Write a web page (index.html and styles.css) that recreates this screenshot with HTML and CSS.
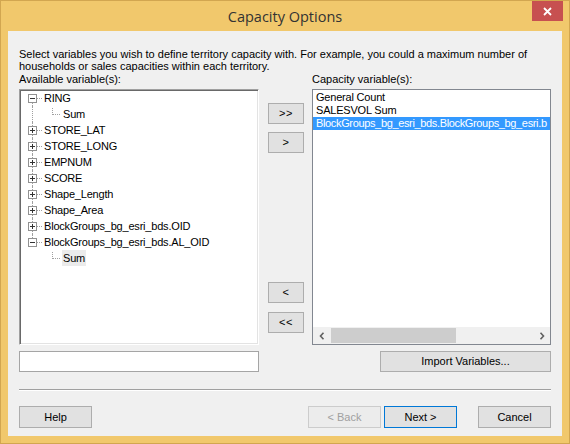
FILE: index.html
```html
<!DOCTYPE html>
<html>
<head>
<meta charset="utf-8">
<title>Capacity Options</title>
<link rel="stylesheet" href="styles.css">
</head>
<body>
<div class="frame">
  <div class="titlebar">
    <div class="title">Capacity Options</div>
    <div class="close">
      <svg width="9" height="9" viewBox="0 0 9 9"><path d="M1 1L8 8M8 1L1 8" stroke="#fff" stroke-width="1.8"/></svg>
    </div>
  </div>
  <div class="client">
    <p class="desc">Select variables you wish to define territory capacity with. For example, you could a maximum number of households or sales capacities within each territory.</p>
    <div class="main">
      <div class="lbl lbl-left">Available variable(s):</div>
      <div class="lbl lbl-right">Capacity variable(s):</div>

      <div class="tree">
        <ul class="nodes">
          <li class="row root first"><svg class="exp" viewBox="0 0 9 9"><rect x="0.5" y="0.5" width="8" height="8" fill="#fff" stroke="#919191"/><path d="M2 4.5h5" stroke="#333"/></svg><span class="h"></span><span class="txt">RING</span></li>
          <li class="row child cont"><span class="txt">Sum</span></li>
          <li class="row root"><svg class="exp" viewBox="0 0 9 9"><rect x="0.5" y="0.5" width="8" height="8" fill="#fff" stroke="#919191"/><path d="M2 4.5h5M4.5 2v5" stroke="#333"/></svg><span class="h"></span><span class="txt">STORE_LAT</span></li>
          <li class="row root"><svg class="exp" viewBox="0 0 9 9"><rect x="0.5" y="0.5" width="8" height="8" fill="#fff" stroke="#919191"/><path d="M2 4.5h5M4.5 2v5" stroke="#333"/></svg><span class="h"></span><span class="txt">STORE_LONG</span></li>
          <li class="row root"><svg class="exp" viewBox="0 0 9 9"><rect x="0.5" y="0.5" width="8" height="8" fill="#fff" stroke="#919191"/><path d="M2 4.5h5M4.5 2v5" stroke="#333"/></svg><span class="h"></span><span class="txt">EMPNUM</span></li>
          <li class="row root"><svg class="exp" viewBox="0 0 9 9"><rect x="0.5" y="0.5" width="8" height="8" fill="#fff" stroke="#919191"/><path d="M2 4.5h5M4.5 2v5" stroke="#333"/></svg><span class="h"></span><span class="txt">SCORE</span></li>
          <li class="row root"><svg class="exp" viewBox="0 0 9 9"><rect x="0.5" y="0.5" width="8" height="8" fill="#fff" stroke="#919191"/><path d="M2 4.5h5M4.5 2v5" stroke="#333"/></svg><span class="h"></span><span class="txt">Shape_Length</span></li>
          <li class="row root"><svg class="exp" viewBox="0 0 9 9"><rect x="0.5" y="0.5" width="8" height="8" fill="#fff" stroke="#919191"/><path d="M2 4.5h5M4.5 2v5" stroke="#333"/></svg><span class="h"></span><span class="txt">Shape_Area</span></li>
          <li class="row root"><svg class="exp" viewBox="0 0 9 9"><rect x="0.5" y="0.5" width="8" height="8" fill="#fff" stroke="#919191"/><path d="M2 4.5h5M4.5 2v5" stroke="#333"/></svg><span class="h"></span><span class="txt">BlockGroups_bg_esri_bds.OID</span></li>
          <li class="row root last"><svg class="exp" viewBox="0 0 9 9"><rect x="0.5" y="0.5" width="8" height="8" fill="#fff" stroke="#919191"/><path d="M2 4.5h5" stroke="#333"/></svg><span class="h"></span><span class="txt">BlockGroups_bg_esri_bds.AL_OID</span></li>
          <li class="row child"><span class="txt hl">Sum</span></li>
        </ul>
      </div>

      <div class="mid">
        <div class="group">
          <button class="btn small">&gt;&gt;</button>
          <button class="btn small">&gt;</button>
        </div>
        <div class="group">
          <button class="btn small">&lt;</button>
          <button class="btn small">&lt;&lt;</button>
        </div>
      </div>

      <div class="list">
        <div class="items">
          <div class="item">General Count</div>
          <div class="item">SALESVOL Sum</div>
          <div class="item sel">BlockGroups_bg_esri_bds.BlockGroups_bg_esri.b</div>
        </div>
        <div class="hscroll">
          <div class="arrow"><svg width="6" height="8" viewBox="0 0 6 8"><path d="M4.5 0.8L1.5 4L4.5 7.2" fill="none" stroke="#606060" stroke-width="1.6"/></svg></div>
          <div class="track"><div class="thumb"></div></div>
          <div class="arrow"><svg width="6" height="8" viewBox="0 0 6 8"><path d="M1.5 0.8L4.5 4L1.5 7.2" fill="none" stroke="#606060" stroke-width="1.6"/></svg></div>
        </div>
      </div>

      <div class="field"></div>
      <button class="btn import">Import Variables...</button>
    </div>
    <div class="sep"></div>
    <div class="footer">
      <button class="btn">Help</button>
      <button class="btn disabled back">&lt; Back</button>
      <button class="btn default next">Next &gt;</button>
      <button class="btn cancel">Cancel</button>
    </div>
  </div>
</div>
</body>
</html>
```
FILE: styles.css
```css
html, body {
  margin: 0;
  padding: 0;
}
body {
  width: 570px;
  height: 444px;
  overflow: hidden;
  background: #f1c86c;
  font-family: "Liberation Sans", Arial, sans-serif;
  font-size: 11px;
  color: #000;
}
.frame {
  box-sizing: border-box;
  width: 570px;
  height: 444px;
  border: 1px solid #d2a650;
  display: flex;
  flex-direction: column;
}
.titlebar {
  height: 30px;
  flex: none;
  display: grid;
  grid-template-columns: 1fr auto 1fr;
  align-items: start;
}
.title {
  grid-column: 2;
  font-family: "Open Sans", "Liberation Sans", sans-serif;
  font-size: 14.5px;
  line-height: 20px;
  padding-top: 6px;
  color: #333;
}
.close {
  grid-column: 3;
  justify-self: end;
  margin-right: 6px;
  width: 31px;
  height: 20px;
  background: #c75050;
  display: flex;
  align-items: center;
  justify-content: center;
}
.client {
  flex: 1;
  margin: 0 7px 7px 7px;
  background: #f0f0f0;
  padding: 17px 11px 8px 11px;
  display: flex;
  flex-direction: column;
}
.desc {
  margin: 0;
  line-height: 12px;
}
.main {
  display: grid;
  grid-template-columns: 240px 53px 239px;
  grid-template-rows: 17px 256px 27px;
}
.lbl {
  grid-row: 1;
  padding-top: 1px;
  line-height: 13px;
}
.lbl-left { grid-column: 1; }
.lbl-right { grid-column: 3; }

.tree {
  grid-row: 2;
  grid-column: 1;
  box-sizing: border-box;
  background: #fff;
  border-top: 1px solid #a0a0a0;
  border-left: 1px solid #a0a0a0;
  border-right: 1px solid #fff;
  border-bottom: 1px solid #fff;
  box-shadow: inset 1px 1px 0 #696969, inset -1px -1px 0 #e3e3e3;
  padding: 1px;
  overflow: hidden;
  letter-spacing: -0.2px;
}
.nodes {
  list-style: none;
  margin: -1px 0 0 0;
  padding: 0;
}
.row {
  position: relative;
  height: 16px;
  display: flex;
  align-items: center;
  white-space: nowrap;
}
.root { padding-left: 7px; }
.child { padding-left: 41px; }
.exp {
  width: 9px;
  height: 9px;
  flex: none;
  position: relative;
  z-index: 1;
}
.h {
  width: 5px;
  height: 0;
  border-top: 1px dotted #a0a0a0;
  margin-right: 2px;
  flex: none;
}
.txt {
  line-height: 16px;
  height: 16px;
}
.child .txt { padding: 0 1px; }
.root::before, .cont::before {
  content: "";
  position: absolute;
  left: 11px;
  top: 0;
  bottom: 0;
  border-left: 1px dotted #a0a0a0;
}
.root.first::before { top: 8px; }
.root.last::before { bottom: 8px; }
.child::after {
  content: "";
  position: absolute;
  left: 31px;
  top: 2px;
  width: 7px;
  height: 6px;
  border-left: 1px dotted #a0a0a0;
  border-bottom: 1px dotted #a0a0a0;
}
.hl { background: #ebebeb; }

.mid {
  grid-row: 2;
  grid-column: 2;
  display: flex;
  flex-direction: column;
  justify-content: space-between;
  padding: 14px 0 12px 9px;
}
.group {
  display: flex;
  flex-direction: column;
  gap: 8px;
}
.group + .group { gap: 9px; }
.btn {
  box-sizing: border-box;
  font-family: inherit;
  font-size: 11px;
  color: #000;
  background: #e1e1e1;
  border: 1px solid #adadad;
  border-radius: 0;
  padding: 0;
  margin: 0;
  height: 22px;
  width: 73px;
  line-height: 20px;
  text-align: center;
}
.btn.small {
  width: 36px;
  height: 21px;
  line-height: 19px;
  letter-spacing: 0.6px;
}

.list {
  grid-row: 2;
  grid-column: 3;
  box-sizing: border-box;
  border: 1px solid #828790;
  background: #fff;
  display: flex;
  flex-direction: column;
  overflow: hidden;
  letter-spacing: -0.2px;
}
.items {
  flex: 1;
  padding-top: 1px;
}
.item {
  height: 13px;
  line-height: 13px;
  padding-left: 3px;
  white-space: nowrap;
  overflow: hidden;
}
.item.sel {
  background: #3399ff;
  color: #fff;
  letter-spacing: -0.35px;
}
.hscroll {
  height: 17px;
  flex: none;
  background: #f0f0f0;
  display: flex;
  align-items: center;
}
.arrow {
  width: 17px;
  height: 17px;
  flex: none;
  display: flex;
  align-items: center;
  justify-content: center;
}
.track {
  flex: 1;
  height: 17px;
  display: flex;
  align-items: center;
}
.thumb {
  margin-left: 1px;
  width: 125px;
  height: 15px;
  background: #cdcdcd;
}
.field {
  grid-row: 3;
  grid-column: 1;
  align-self: end;
  box-sizing: border-box;
  height: 21px;
  background: #fff;
  border: 1px solid #a5a5a5;
}
.btn.import {
  grid-row: 3;
  grid-column: 3;
  align-self: end;
  justify-self: end;
  width: 171px;
  height: 21px;
  line-height: 19px;
}
.sep {
  margin-top: 17px;
  height: 0;
  border-top: 1px solid #a0a0a0;
  border-bottom: 1px solid #fff;
}
.footer {
  margin-top: 15px;
  display: flex;
}
.btn.back { margin-left: auto; }
.btn.next { margin-left: 3px; }
.btn.cancel { margin-left: 21px; }
.btn.disabled {
  color: #a0a0a0;
  background: #ececec;
  border-color: #cccccc;
}
.btn.default {
  border-color: #0078d7;
}
```
